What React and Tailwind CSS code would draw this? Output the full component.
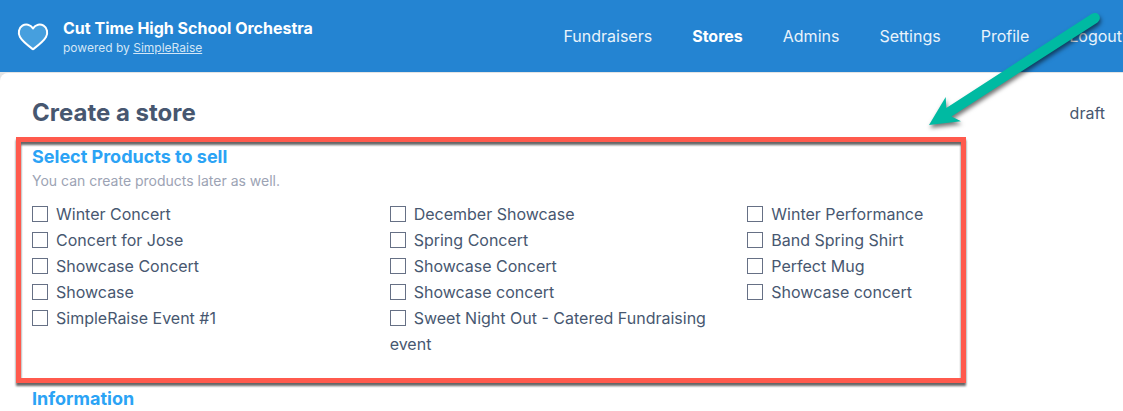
import React, { useState } from 'react';

const navItems = ['Fundraisers', 'Stores', 'Admins', 'Settings', 'Profile', 'Logout'];

const productColumns = [
  ['Winter Concert', 'Concert for Jose', 'Showcase Concert', 'Showcase', 'SimpleRaise Event #1'],
  ['December Showcase', 'Spring Concert', 'Showcase Concert', 'Showcase concert', 'Sweet Night Out - Catered Fundraising event'],
  ['Winter Performance', 'Band Spring Shirt', 'Perfect Mug', 'Showcase concert'],
];

const HeartLogo = () => (
  <svg className="w-8 h-7 shrink-0" viewBox="0 0 32 28" fill="#469fde" stroke="white" strokeWidth="2" strokeLinejoin="round" aria-hidden="true">
    <path d="M16 5.4C13.3 1.2 8.600 0.700 5.400 2.700C1.700 5 0.800 10 3 14C5.500 18.500 11 22.500 16 26.300C21 22.500 26.500 18.500 29 14C31.200 10 30.300 5 26.600 2.700C23.400 0.700 18.700 1.200 16 5.400Z" />
  </svg>
);

const Arrow = () => (
  <svg className="absolute top-2 right-4 w-[184px] h-32 pointer-events-none drop-shadow-[1px_3px_2px_rgba(0,0,0,0.55)]" viewBox="923 8 184 128" fill="#00baa2" aria-hidden="true">
    <path d="M929 125L945.700 97L946.300 108L1091.500 14C1098 10.500 1103 17.500 1097.500 22.500L951.500 116.500L961 121.300Z" />
  </svg>
);

const Header = () => (
  <header className="flex items-center justify-between h-18 pl-[17px] pr-px bg-[#2484d2] text-white">
    <div className="flex items-center gap-[14px] pt-0.5">
      <HeartLogo />
      <div className="pt-0.5">
        <div className="text-base leading-5 font-bold">Cut Time High School Orchestra</div>
        <div className="text-xs leading-5 text-[#d3e6f6]">
          powered by <a href="#simpleraise" className="underline">SimpleRaise</a>
        </div>
      </div>
    </div>
    <nav className="flex gap-10">
      {navItems.map((item) => (
        <a key={item} href={`#${item.toLowerCase()}`} className={item === 'Stores' ? 'font-bold' : 'text-[#e9f3fb]'}>{item}</a>
      ))}
    </nav>
  </header>
);

const App = () => {
  const [selected, setSelected] = useState({});

  const toggle = (id) => setSelected({ ...selected, [id]: !selected[id] });

  return (
    <div className="relative overflow-hidden bg-[#e4e4e4] text-base text-[#475770] font-['Inter',sans-serif]">
      <Header />
      <main className="mt-px rounded-tl-lg bg-white pl-8 pr-[18px] pt-5">
        <div className="flex items-center justify-between mb-3">
          <h1 className="text-2xl leading-10 font-bold">Create a store</h1>
          <span>draft</span>
        </div>

        <section className="relative pb-[30px]">
          <h2 className="text-lg leading-6 font-bold text-[#2ba3f5]">Select Products to sell</h2>
          <p className="text-sm leading-6 text-[#9ca3b4]">You can create products later as well.</p>
          <div className="grid grid-cols-3 mt-2">
            {productColumns.map((products, col) => (
              <div key={col}>
                {products.map((name, row) => {
                  const id = `product-${col}-${row}`;
                  return (
                    <div key={id} className="leading-[26px]">
                      <input type="checkbox" id={id} checked={!!selected[id]} onChange={() => toggle(id)} className="appearance-none size-4 mr-2 align-middle -mt-1 border border-[#667085] bg-white checked:bg-[#2484d2]" />
                      <label htmlFor={id}>{name}</label>
                    </div>
                  );
                })}
              </div>
            ))}
          </div>
          <div className="absolute -top-2 bottom-1 -left-4 right-[139px] border-5 border-[#ff5a4d] pointer-events-none drop-shadow-[0_3px_1px_rgba(0,0,0,0.6)]" />
        </section>

        <section>
          <h2 className="text-lg leading-6 font-bold text-[#2ba3f5]">Information</h2>
        </section>
      </main>
      <Arrow />
    </div>
  );
};

export default App;
